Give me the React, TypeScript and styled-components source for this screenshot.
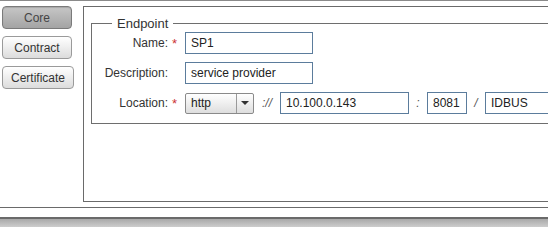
import React from 'react';
import styled, { createGlobalStyle } from 'styled-components';

const GlobalStyle = createGlobalStyle`
  html, body {
    margin: 0;
    padding: 0;
    background: #ffffff;
    overflow: hidden;
  }
  body {
    font-family: "Liberation Sans", Arial, sans-serif;
    font-size: 12px;
    color: #333333;
  }
`;

const Page = styled.div`
  width: 100vw;
  height: 227px;
  display: flex;
  flex-direction: column;
  border-top: 1px solid #8a8a8a;
  box-sizing: border-box;
  overflow: hidden;
`;

const Content = styled.div`
  display: flex;
  padding-top: 5px;
  min-width: 0;
`;

const Sidebar = styled.div`
  flex-shrink: 0;
  width: 81px;
  padding-left: 2px;
  display: flex;
  flex-direction: column;
  align-items: flex-start;
  gap: 7px;
`;

type TabButtonProps = {
  selected?: boolean;
};

const TabButton = styled.button<TabButtonProps>`
  height: 23px;
  min-width: 70px;
  padding: 0 8px;
  box-sizing: border-box;
  border-radius: 4px;
  border: 1px solid ${props => props.selected ? '#7a7a7a' : '#9a9a9a'};
  background: ${props => props.selected
    ? 'linear-gradient(to bottom, #c6c6c6, #a4a4a4)'
    : 'linear-gradient(to bottom, #ffffff, #dcdcdc)'};
  box-shadow: ${props => props.selected ? 'inset 0 1px 1px rgba(0,0,0,0.15)' : 'none'};
  font-family: "Liberation Sans", Arial, sans-serif;
  font-size: 12px;
  color: ${props => props.selected ? '#444444' : '#333333'};
  cursor: pointer;
`;

const Panel = styled.div`
  flex: 1;
  min-width: 0;
  height: 196px;
  box-sizing: border-box;
  border: 1px solid #6a6a6a;
  border-right: none;
  padding: 9px 0 0 7px;
  overflow: hidden;
`;

const Group = styled.fieldset`
  margin: 0;
  min-width: 0;
  box-sizing: border-box;
  border: 1px solid #6e6e6e;
  border-right: none;
  padding: 1px 0 9px 10px;
`;

const Legend = styled.legend`
  margin-left: 10px;
  padding: 0 5px;
  font-size: 13px;
  color: #333333;
  line-height: 15px;
`;

const Form = styled.div`
  display: grid;
  grid-template-columns: 66px 17px 1fr;
  row-gap: 8px;
  align-items: center;
`;

const Label = styled.div`
  text-align: right;
  white-space: nowrap;
  font-size: 12px;
  color: #333333;
`;

const Star = styled.span`
  color: #cc3333;
  font-size: 13px;
  padding-left: 4px;
`;

const Blank = styled.span``;

type FieldProps = {
  width: number;
};

const TextField = styled.input<FieldProps>`
  flex-shrink: 0;
  width: ${props => props.width}px;
  height: 22px;
  box-sizing: border-box;
  border: 1px solid #5b7c9c;
  padding: 0 5px;
  font-family: "Liberation Sans", Arial, sans-serif;
  font-size: 12px;
  color: #222222;
  background: #ffffff;
  outline: none;
`;

const LocationRow = styled.div`
  display: flex;
  align-items: center;
  min-width: 0;
  overflow: hidden;
`;

const Select = styled.div`
  flex-shrink: 0;
  width: 69px;
  height: 21px;
  box-sizing: border-box;
  border: 1px solid #8a8a8a;
  border-radius: 2px;
  background: linear-gradient(to bottom, #ffffff, #dedede);
  display: flex;
  align-items: stretch;
`;

const SelectValue = styled.div`
  flex: 1;
  padding-left: 5px;
  display: flex;
  align-items: center;
  font-size: 12px;
  color: #222222;
`;

const SelectArrow = styled.div`
  width: 16px;
  border-left: 1px solid #9a9a9a;
  display: flex;
  align-items: center;
  justify-content: center;
`;

type SepProps = {
  width: number;
};

const Sep = styled.span<SepProps>`
  flex-shrink: 0;
  width: ${props => props.width}px;
  text-align: center;
  font-size: 12px;
  font-style: italic;
  color: #555555;
`;

const Footer = styled.div`
  margin-top: 5px;
  border-top: 1px solid #6a6a6a;
  height: 9px;
`;

const StatusBar = styled.div`
  flex: 1;
  border-top: 2px solid #6a6a6a;
  background: linear-gradient(to bottom, #a9a9a9, #cdcdcd);
`;

export default function App() {
  return (
    <>
      <GlobalStyle />
      <Page>
        <Content>
          <Sidebar>
            <TabButton selected>Core</TabButton>
            <TabButton>Contract</TabButton>
            <TabButton>Certificate</TabButton>
          </Sidebar>
          <Panel>
            <Group>
              <Legend>Endpoint</Legend>
              <Form>
                <Label>Name:</Label>
                <Star>*</Star>
                <TextField width={128} defaultValue="SP1" />

                <Label>Description:</Label>
                <Blank />
                <TextField width={128} defaultValue="service provider" />

                <Label>Location:</Label>
                <Star>*</Star>
                <LocationRow>
                  <Select>
                    <SelectValue>http</SelectValue>
                    <SelectArrow>
                      <svg width="8" height="4" viewBox="0 0 8 4">
                        <path d="M0 0 L8 0 L4 4 Z" fill="#333333" />
                      </svg>
                    </SelectArrow>
                  </Select>
                  <Sep width={26}>://</Sep>
                  <TextField width={129} defaultValue="10.100.0.143" />
                  <Sep width={18}>:</Sep>
                  <TextField width={40} defaultValue="8081" />
                  <Sep width={18}>/</Sep>
                  <TextField width={120} defaultValue="IDBUS" />
                </LocationRow>
              </Form>
            </Group>
          </Panel>
        </Content>
        <Footer />
        <StatusBar />
      </Page>
    </>
  );
}
